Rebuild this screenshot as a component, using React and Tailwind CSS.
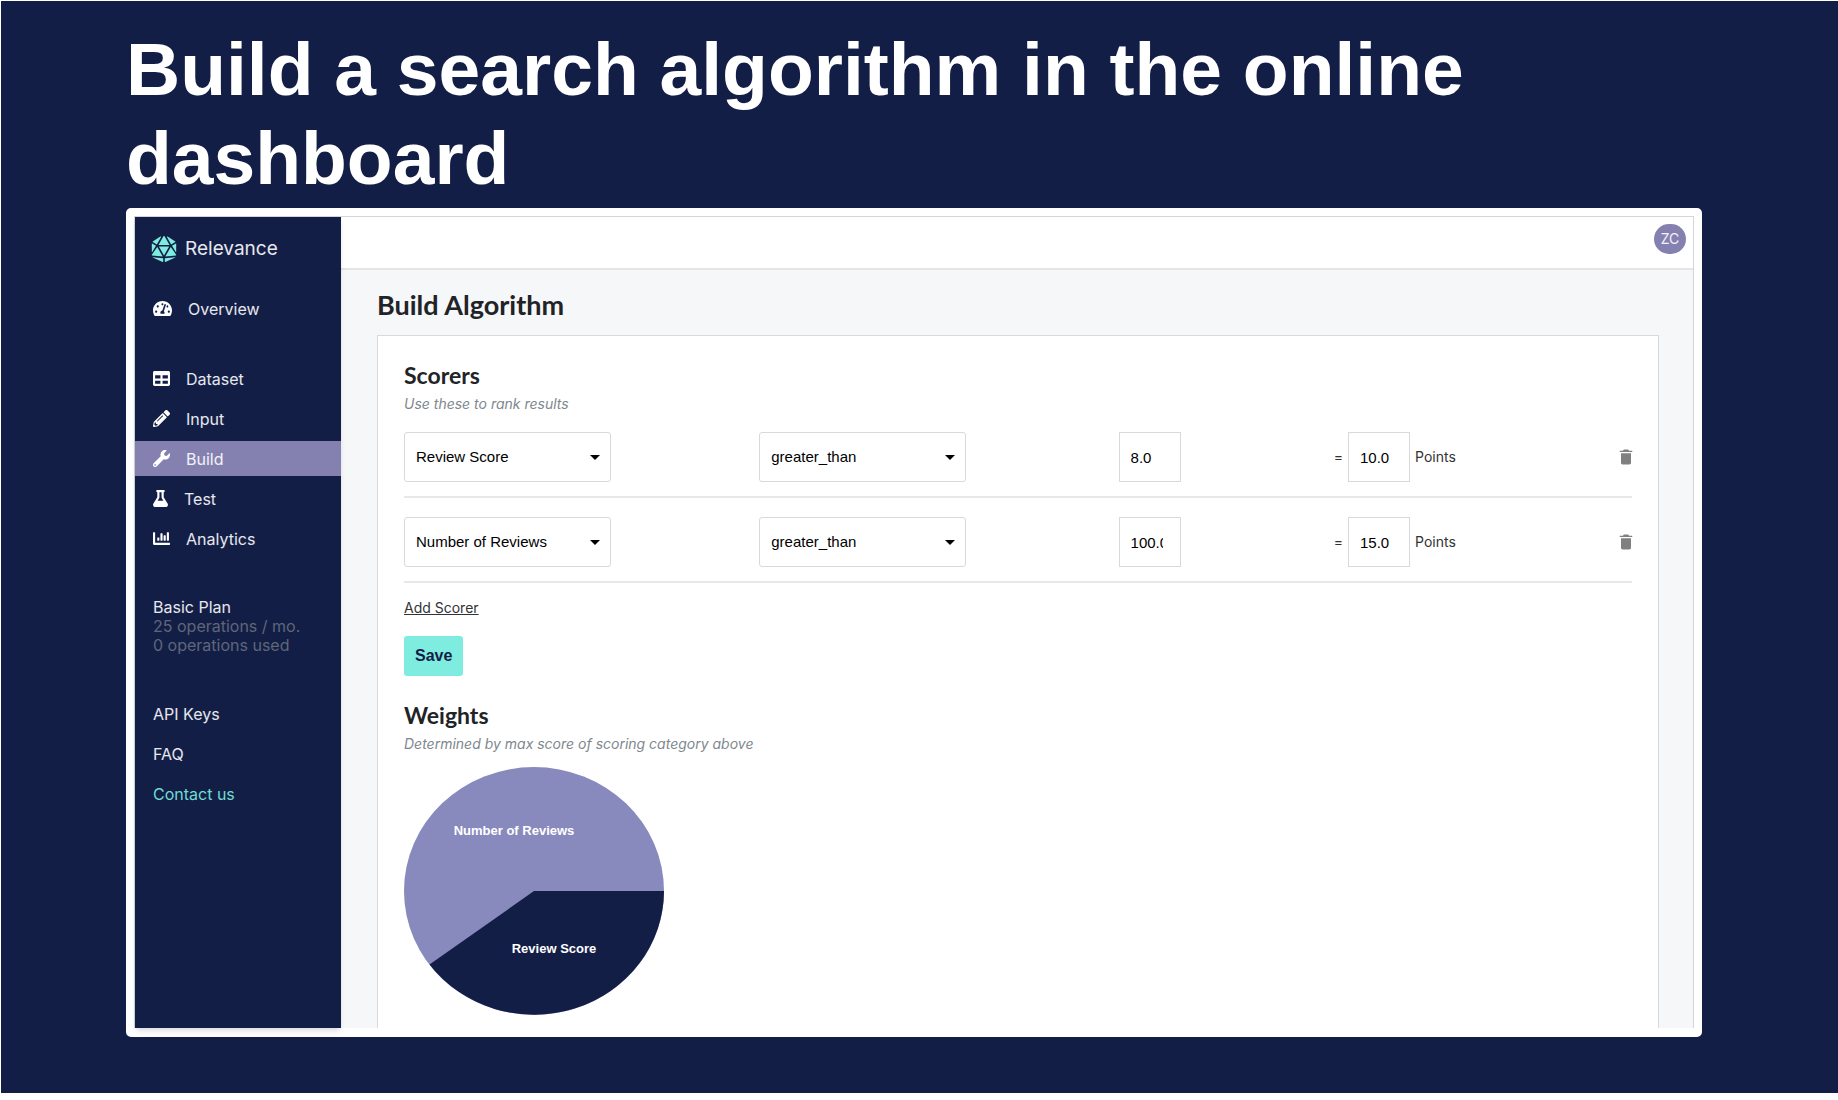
import React, { useState } from "react";
import { FaDiceD20, FaTachometerAlt, FaTable, FaPencilAlt, FaWrench, FaFlask, FaChartBar } from "react-icons/fa";
import { IoMdTrash } from "react-icons/io";
import { MdArrowDropDown } from "react-icons/md";

const navItems = [
  { label: "Dataset", icon: FaTable, iconWidth: "w-[17px]" },
  { label: "Input", icon: FaPencilAlt, iconWidth: "w-[17px]" },
  { label: "Build", icon: FaWrench, iconWidth: "w-[17px]" },
  { label: "Test", icon: FaFlask, iconWidth: "w-[15px]" },
  { label: "Analytics", icon: FaChartBar, iconWidth: "w-[17px]" },
];

const fields = ["Review Score", "Number of Reviews"];
const operators = ["greater_than", "less_than"];

const NavItem = ({ label, icon: Icon, iconWidth, active }) => (
  <a
    href="#"
    className={`flex h-[35px] items-center gap-4 pl-[18px] text-white/90 ${active ? "bg-[#8481b1]" : ""}`}
  >
    <Icon className={`h-[17px] shrink-0 text-white ${iconWidth}`} />
    {label}
  </a>
);

const Sidebar = () => (
  <aside className="z-10 w-[206px] shrink-0 bg-[#131e47] text-base text-white/90 shadow-md">
    <a href="#" className="flex h-16 items-center gap-2 pl-4 text-[19px]">
      <FaDiceD20 className="h-[26px] w-[26px] text-[#7eecdf]" />
      Relevance
    </a>

    <nav className="mt-[10px]">
      <NavItem label="Overview" icon={FaTachometerAlt} iconWidth="w-[19px]" />
      <div className="mt-[35px] flex flex-col gap-[5px]">
        {navItems.map((item) => (
          <NavItem key={item.label} {...item} active={item.label === "Build"} />
        ))}
      </div>
    </nav>

    <div className="mt-[42px] pl-[18px] leading-[19px]">
      <p>Basic Plan</p>
      <p className="text-[#5f6678]">25 operations / mo.</p>
      <p className="text-[#5f6678]">0 operations used</p>
    </div>

    <div className="mt-[47px] flex flex-col gap-4 pl-[18px] leading-6">
      <a href="#">API Keys</a>
      <a href="#">FAQ</a>
      <a href="#" className="text-[#6fdcd0]">Contact us</a>
    </div>
  </aside>
);

const SelectBox = ({ label, value, options, onChange }) => (
  <div className="relative w-[207px]">
    <select
      aria-label={label}
      value={value}
      onChange={(e) => onChange(e.target.value)}
      className="h-[50px] w-full appearance-none rounded-[3px] border border-[#d6d9de] bg-white pl-[11px] font-['Liberation_Sans',sans-serif] text-[15px] text-black"
    >
      {options.map((option) => (
        <option key={option}>{option}</option>
      ))}
    </select>
    <MdArrowDropDown className="pointer-events-none absolute right-1 top-[13px] h-6 w-6 text-black" />
  </div>
);

const NumberBox = ({ label, value, onChange }) => (
  <input
    aria-label={label}
    value={value}
    onChange={(e) => onChange(e.target.value)}
    className="h-[50px] w-[62px] border border-[#d6d9de] bg-white pl-[11px] pr-[17px] font-['Liberation_Sans',sans-serif] text-[15px] text-black"
  />
);

const ScorerRow = ({ scorer, onChange, onDelete }) => (
  <div className="grid grid-cols-[355fr_359fr_215fr_298fr] items-center border-b-2 border-[#e8e8e9] pb-[14px]">
    <SelectBox label="Field" value={scorer.field} options={fields} onChange={(v) => onChange({ field: v })} />
    <SelectBox label="Operator" value={scorer.operator} options={operators} onChange={(v) => onChange({ operator: v })} />
    <NumberBox label="Threshold" value={scorer.threshold} onChange={(v) => onChange({ threshold: v })} />
    <div className="flex items-center gap-[5px] text-sm text-[#333]">
      <span>=</span>
      <NumberBox label="Points" value={scorer.points} onChange={(v) => onChange({ points: v })} />
      <span>Points</span>
      <button type="button" aria-label="Delete scorer" onClick={onDelete} className="ml-auto text-[#808080]">
        <IoMdTrash className="-mr-1 h-5 w-5" />
      </button>
    </div>
  </div>
);

const WeightsChart = () => (
  <svg viewBox="0 0 260 248" className="h-[248px] w-[260px]" role="img" aria-label="Weights">
    <ellipse cx="130" cy="124" rx="130" ry="124" fill="#888abd" />
    <path d="M130 124H260A130 124 0 0 1 25.500 197.500Z" fill="#131e47" />
    <g fill="#fff" fontSize="13" fontWeight="700" textAnchor="middle" fontFamily="'Liberation Sans', sans-serif">
      <text x="110" y="68">Number of Reviews</text>
      <text x="150" y="186">Review Score</text>
    </g>
  </svg>
);

const App = () => {
  const [scorers, setScorers] = useState([
    { id: 1, field: "Review Score", operator: "greater_than", threshold: "8.0", points: "10.0" },
    { id: 2, field: "Number of Reviews", operator: "greater_than", threshold: "100.0", points: "15.0" },
  ]);

  const updateScorer = (id, changes) => {
    setScorers(scorers.map((s) => (s.id === id ? { ...s, ...changes } : s)));
  };

  const addScorer = () => {
    setScorers([...scorers, { id: Date.now(), field: fields[0], operator: operators[0], threshold: "0.0", points: "0.0" }]);
  };

  return (
    <div className="min-h-screen bg-white pl-px pt-px font-['Inter',sans-serif]">
      <div className="bg-[#131e47] pb-14 pl-[125px] pr-[136px] pt-6">
        <h1 className="font-['Liberation_Sans',sans-serif] text-[75px] font-bold leading-[89px] text-white">
          Build a search algorithm in the online dashboard
        </h1>

        <div className="mt-[5px] rounded-[5px] border-8 border-b-9 border-white bg-white">
          <div className="flex border border-b-0 border-[#d3d5dc]">
            <Sidebar />

            <div className="min-w-0 flex-1 bg-[#f6f7f9]">
              <header className="flex h-[53px] items-start justify-end border-b-2 border-[#e4e5e7] bg-white pr-[7px] pt-[7px]">
                <button type="button" className="h-[30px] w-8 rounded-full bg-[#8481b1] text-sm text-white/90">
                  ZC
                </button>
              </header>

              <main className="pl-9 pr-[34px]">
                <h2 className="pb-[13px] pt-[18px] font-['Lato',sans-serif] text-[27px] font-bold leading-[34px] text-[#212326]">
                  Build Algorithm
                </h2>

                <section className="border border-b-0 border-[#d9dadc] bg-white px-[26px] pb-[13px] pt-6">
                  <h3 className="font-['Lato',sans-serif] text-[23px] font-bold leading-[30px] text-[#212326]">Scorers</h3>
                  <p className="text-sm italic leading-7 text-[#80878e]">Use these to rank results</p>

                  <div className="mt-[14px] flex flex-col gap-[19px]">
                    {scorers.map((scorer) => (
                      <ScorerRow
                        key={scorer.id}
                        scorer={scorer}
                        onChange={(changes) => updateScorer(scorer.id, changes)}
                        onDelete={() => setScorers(scorers.filter((s) => s.id !== scorer.id))}
                      />
                    ))}
                  </div>

                  <button type="button" onClick={addScorer} className="mt-[13px] block text-sm leading-6 text-[#333] underline">
                    Add Scorer
                  </button>
                  <button
                    type="button"
                    className="mt-4 h-10 rounded-[3px] bg-[#7eecdf] px-[11px] font-['Liberation_Sans',sans-serif] text-base font-bold text-[#131e47]"
                  >
                    Save
                  </button>

                  <h3 className="mt-6 font-['Lato',sans-serif] text-[23px] font-bold leading-[30px] text-[#212326]">Weights</h3>
                  <p className="mb-[9px] text-sm italic leading-7 text-[#80878e]">
                    Determined by max score of scoring category above
                  </p>
                  <WeightsChart />
                </section>
              </main>
            </div>
          </div>
        </div>
      </div>
    </div>
  );
};

export default App;
